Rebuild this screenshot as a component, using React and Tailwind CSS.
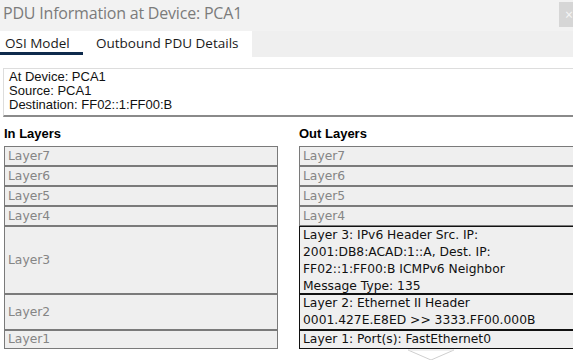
import React from "react";

const arial = { fontFamily: '"Liberation Sans", Arial, sans-serif' };

function Row({ h, text, active, center, lines }) {
  return (
    <div
      className={`box-border border bg-[#efefef] px-[3px] ${
        active ? "border-[#111] text-[#111]" : "border-[#7a7a7a] text-[#858585]"
      } ${center ? "flex items-center" : ""}`}
      style={{ height: h }}
    >
      <div className="leading-[17px] whitespace-pre">{lines ? lines.join("\n") : text}</div>
    </div>
  );
}

export default function App() {
  return (
    <div className="relative w-[573px] h-[360px] overflow-hidden bg-white">
      {/* Title bar */}
      <div className="h-[31px] bg-[#f2f2f2] flex justify-between items-start">
        <div
          className="pl-[3px] pt-[3px] text-[16px] leading-[20px] text-[#7b7b7b]"
          style={{ fontFamily: '"Open Sans", "Noto Sans", sans-serif', letterSpacing: "-0.2px" }}
        >
          PDU Information at Device: PCA1
        </div>
        <div className="mt-[2px] w-[14px] h-[25px] bg-[#d6d6d6] overflow-hidden flex items-center pl-[6px] text-[14px] text-[#f4f4f4]">
          ×
        </div>
      </div>

      {/* Tabs */}
      <div
        className="h-[26px] bg-[#efefef] flex text-[13.5px] text-[#1a1a1a]"
        style={{ fontFamily: '"Open Sans", "Noto Sans", sans-serif' }}
      >
        <div className="w-[84px] bg-white flex flex-col">
          <div className="pl-[5px] pt-[4px] leading-[17px] h-[21px]">OSI Model</div>
          <div className="h-[3px] w-[83px] bg-[#0e2a4c]" />
        </div>
        <div className="w-[168px] bg-white pl-[12px] pt-[4px] leading-[17px]">Outbound PDU Details</div>
      </div>

      {/* Info box */}
      <div
        className="mt-[11px] ml-[3px] h-[49px] border-t border-l border-[#dddddd] border-b-2 border-b-[#8a8a8a] pl-[5px] pt-[1px] text-[13px] leading-[14px] text-[#111]"
        style={arial}
      >
        <div>At Device: PCA1</div>
        <div>Source: PCA1</div>
        <div>Destination: FF02::1:FF00:B</div>
      </div>

      {/* Layers */}
      <div className="flex gap-[21px] pl-[4px]">
        <div className="w-[274px] shrink-0">
          <div className="h-[29px] pt-[9px] text-[13px] leading-[15px] font-bold text-black" style={arial}>
            In Layers
          </div>
          <div className="text-[12.3px]" style={{ fontFamily: '"DejaVu Sans", Verdana, sans-serif' }}>
            <Row h={20} text="Layer7" center />
            <Row h={20} text="Layer6" center />
            <Row h={20} text="Layer5" center />
            <Row h={20} text="Layer4" center />
            <Row h={68} text="Layer3" center />
            <Row h={36} text="Layer2" center />
            <Row h={19} text="Layer1" center />
          </div>
        </div>
        <div className="w-[280px] shrink-0">
          <div className="h-[29px] pt-[9px] text-[13px] leading-[15px] font-bold text-black" style={arial}>
            Out Layers
          </div>
          <div className="text-[12.3px]" style={{ fontFamily: '"DejaVu Sans", Verdana, sans-serif' }}>
            <Row h={20} text="Layer7" center />
            <Row h={20} text="Layer6" center />
            <Row h={20} text="Layer5" center />
            <Row h={20} text="Layer4" center />
            <Row
              h={68}
              active
              lines={[
                "Layer 3: IPv6 Header Src. IP:",
                "2001:DB8:ACAD:1::A, Dest. IP:",
                "FF02::1:FF00:B ICMPv6 Neighbor",
                "Message Type: 135",
              ]}
            />
            <Row h={36} active lines={["Layer 2: Ethernet II Header", "0001.427E.E8ED >> 3333.FF00.000B"]} />
            <Row h={19} active center text="Layer 1: Port(s): FastEthernet0" />
          </div>
        </div>
      </div>

      {/* Scroll chevron */}
      <svg className="absolute left-[407px] top-[349px]" width="48" height="12" viewBox="0 0 48 12">
        <polyline points="1,1 24,11 47,1" fill="none" stroke="#cfcfcf" strokeWidth="1" />
        <polyline points="1,1 47,1" fill="none" stroke="#e2e2e2" strokeWidth="1" />
      </svg>
    </div>
  );
}
